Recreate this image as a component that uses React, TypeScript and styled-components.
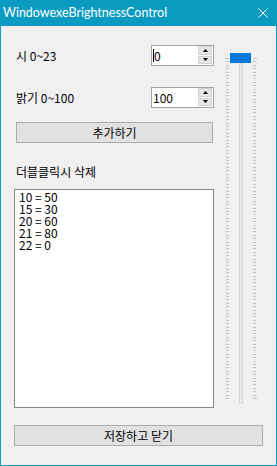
import React from 'react';
import styled, { createGlobalStyle } from 'styled-components';

const GlobalStyle = createGlobalStyle`
  html, body {
    margin: 0;
    padding: 0;
    background: #f0f0f0;
  }
  body {
    font-family: "Noto Sans CJK KR", "Noto Sans", sans-serif;
    font-size: 12px;
    color: #000;
  }
`;

const ACCENT = '#0b9bc0';

const entries = ['10 = 50', '15 = 30', '20 = 60', '21 = 80', '22 = 0'];

function SpinArrow({ up }: { up?: boolean }) {
  return (
    <svg width="5" height="3" viewBox="0 0 5 3">
      {up ? <polygon points="0,3 5,3 2.5,0" fill="#000" /> : <polygon points="0,0 5,0 2.5,3" fill="#000" />}
    </svg>
  );
}

function NumericBox({ value, caret }: { value: string; caret?: boolean }) {
  return (
    <SpinBox>
      <SpinText>
        {caret && <Caret />}
        {value}
      </SpinText>
      <SpinButtons>
        <SpinButton>
          <SpinArrow up />
        </SpinButton>
        <SpinButton>
          <SpinArrow />
        </SpinButton>
      </SpinButtons>
    </SpinBox>
  );
}

function TrackBar() {
  const ticks = Array.from({ length: 101 }, (_, i) => i);
  return (
    <Track>
      <svg width="33" height="351" viewBox="0 0 33 351">
        {ticks.map((i) => {
          const y = 5 + Math.round(i * 3.4);
          const end = i === 0 || i === 100;
          return (
            <g key={i} fill="#c4c4c4">
              <rect x={end ? 0 : 1} y={y} width={end ? 4 : 3} height={1} />
              <rect x={28} y={y} width={end ? 4 : 3} height={1} />
            </g>
          );
        })}
      </svg>
      <Rail />
      <Thumb />
    </Track>
  );
}

function App() {
  return (
    <>
      <GlobalStyle />
      <Window>
        <TitleBar>
          <Title>WindowexeBrightnessControl</Title>
          <svg width="10" height="10" viewBox="0 0 10 10">
            <path d="M0.5 0.5 L9.5 9.5 M9.5 0.5 L0.5 9.5" stroke="#fff" strokeWidth="1" />
          </svg>
        </TitleBar>
        <Body>
          <Main>
            <LeftCol>
              <FieldRow>
                <Label>시 0~23</Label>
                <NumericBox value="0" caret />
              </FieldRow>
              <FieldRow $gap={21}>
                <Label>밝기 0~100</Label>
                <NumericBox value="100" />
              </FieldRow>
              <AddButton>추가하기</AddButton>
              <ListLabel>더블클릭시 삭제</ListLabel>
              <ListBox>
                {entries.map((e) => (
                  <ListItem key={e}>{e}</ListItem>
                ))}
              </ListBox>
            </LeftCol>
            <RightCol>
              <TrackBar />
            </RightCol>
          </Main>
          <SaveButton>저장하고 닫기</SaveButton>
        </Body>
      </Window>
    </>
  );
}

const Window = styled.div`
  width: 277px;
  height: 466px;
  box-sizing: border-box;
  border: 1px solid ${ACCENT};
  border-top: none;
  display: flex;
  flex-direction: column;
  background: #f0f0f0;
`;

const TitleBar = styled.div`
  height: 26px;
  flex-shrink: 0;
  background: ${ACCENT};
  display: flex;
  align-items: center;
  justify-content: space-between;
  padding: 0 9px 0 3px;
  margin: 0 -1px;
  color: #fff;
`;

const Title = styled.div`
  font-family: Lato, "Noto Sans", sans-serif;
  font-size: 12.5px;
  line-height: 26px;
  white-space: nowrap;
`;

const Body = styled.div`
  display: flex;
  flex-direction: column;
  padding: 19px 13px 0 13px;
`;

const Main = styled.div`
  display: flex;
`;

const LeftCol = styled.div`
  width: 200px;
  display: flex;
  flex-direction: column;
`;

const FieldRow = styled.div<{ $gap?: number }>`
  display: flex;
  align-items: center;
  justify-content: space-between;
  height: 21px;
  padding-left: 2px;
  margin-top: ${(p) => p.$gap ?? 0}px;
`;

const Label = styled.span`
  font-size: 12px;
  line-height: 14px;
  white-space: nowrap;
`;

const SpinBox = styled.div`
  width: 63px;
  height: 21px;
  box-sizing: border-box;
  border: 1px solid #a4a4a4;
  background: #fff;
  display: flex;
`;

const SpinText = styled.div`
  flex: 1;
  display: flex;
  align-items: center;
  padding-left: 1px;
  font-size: 12px;
  line-height: 19px;
`;

const Caret = styled.span`
  display: inline-block;
  width: 1px;
  height: 13px;
  background: #000;
`;

const SpinButtons = styled.div`
  width: 14px;
  display: flex;
  flex-direction: column;
  gap: 1px;
  padding: 0 1px 1px 0;
`;

const SpinButton = styled.div`
  flex: 1;
  box-sizing: border-box;
  background: #e5e5e5;
  border: 1px solid #d2d2d2;
  display: flex;
  align-items: center;
  justify-content: center;
`;

const PushButton = styled.div`
  height: 21px;
  box-sizing: border-box;
  background: #e1e1e1;
  border: 1px solid #adadad;
  display: flex;
  align-items: center;
  justify-content: center;
  font-size: 12px;
  line-height: 14px;
`;

const AddButton = styled(PushButton)`
  width: 197px;
  margin: 14px 0 0 2px;
`;

const ListLabel = styled.div`
  height: 14px;
  line-height: 14px;
  padding-left: 2px;
  margin: 22px 0 10px;
`;

const ListBox = styled.div`
  height: 219px;
  box-sizing: border-box;
  border: 1px solid #828790;
  background: #fff;
  padding: 1px 4px;
`;

const ListItem = styled.div`
  height: 12px;
  line-height: 12px;
  font-size: 12px;
  white-space: nowrap;
`;

const RightCol = styled.div`
  margin: 8px 0 0 11px;
`;

const Track = styled.div`
  position: relative;
  width: 33px;
  height: 351px;
  svg {
    display: block;
  }
`;

const Rail = styled.div`
  position: absolute;
  left: 14px;
  top: 10px;
  width: 4px;
  height: 341px;
  box-sizing: border-box;
  border: 1px solid #d6d6d6;
  background: #e7e7e7;
`;

const Thumb = styled.div`
  position: absolute;
  left: 5px;
  top: 0;
  width: 21px;
  height: 10px;
  background: #0078d7;
`;

const SaveButton = styled(PushButton)`
  width: 249px;
  margin-top: 17px;
`;

export default App;
